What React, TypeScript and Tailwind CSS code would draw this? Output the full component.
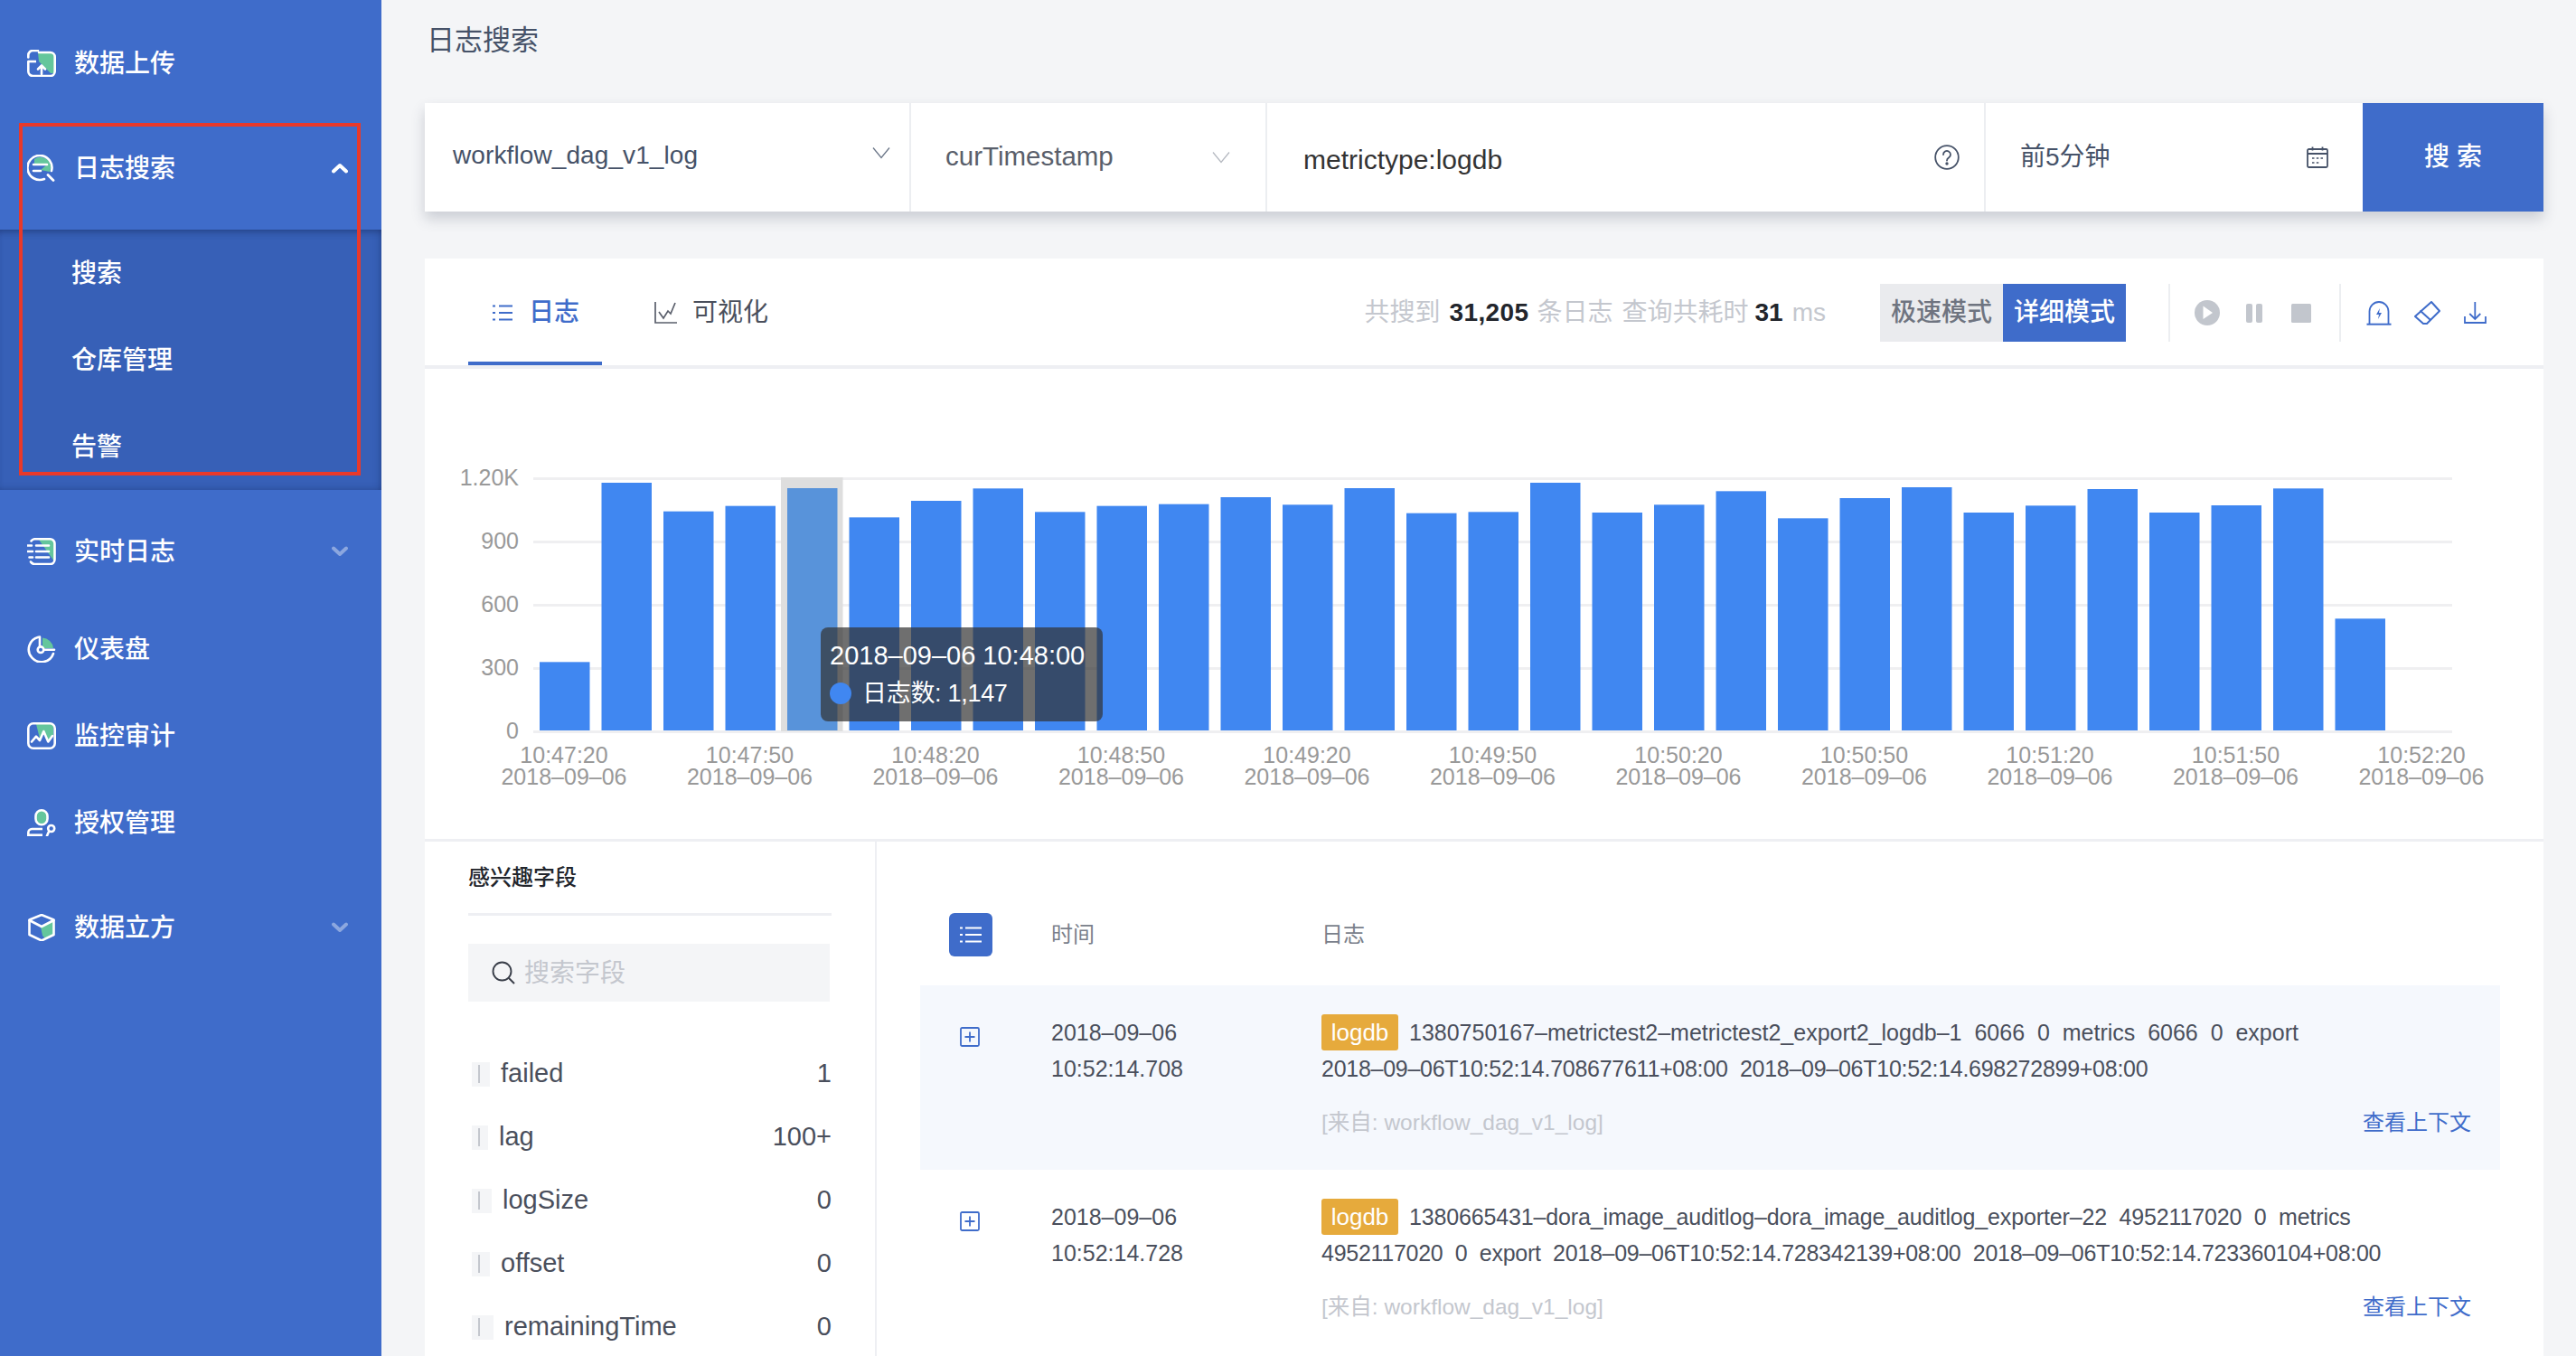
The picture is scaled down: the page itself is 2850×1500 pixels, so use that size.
import React from "react";

const G = "#64c69c";
const W = 2.6;

const IconUpload = () => (
  <svg width="32" height="30" viewBox="0 0 32 30" fill="none">
    <path d="M12 3H25a5 5 0 0 1 5 5V26H26L13 13z" fill={G} />
    <path d="M1.300 8.500V6a5 5 0 0 1 5-5H12" stroke="#fff" strokeWidth={W} strokeLinecap="round" />
    <path d="M1.300 13V24a5 5 0 0 0 5 5H25.700a5 5 0 0 0 5-5V8a5 5 0 0 0-5-5H13" stroke="#fff" strokeWidth={W} strokeLinecap="round" />
    <path d="M1.300 13H10" stroke="#fff" strokeWidth={W} />
    <path d="M16 27V18M12 21.500 16 17.500l4 4" stroke="#fff" strokeWidth={W} strokeLinecap="round" strokeLinejoin="round" />
  </svg>
);
const IconLogSearch = () => (
  <svg width="32" height="30" viewBox="0 0 32 30" fill="none">
    <path d="M8 5a12 12 0 0 1 16 2L26.500 13 25 19 15 17 22 11H8z" fill={G} />
    <path d="M27 18A13.500 13.500 0 1 0 19 27" stroke="#fff" strokeWidth={W} strokeLinecap="round" />
    <path d="M23 22.500 29 28.500" stroke="#fff" strokeWidth="2.800" strokeLinecap="round" />
    <path d="M7 11H22M7 18H15" stroke="#fff" strokeWidth={W} strokeLinecap="round" />
  </svg>
);
const IconRealtime = () => (
  <svg width="32" height="30" viewBox="0 0 32 30" fill="none">
    <path d="M13 2H26a4 4 0 0 1 4 4V26L13 2z" fill={G} />
    <path d="M4.500 3.500A5 5 0 0 1 8 1.300H25.500a5 5 0 0 1 5 5V24a5 5 0 0 1-5 5H8a5 5 0 0 1-4-2.500" stroke="#fff" strokeWidth={W} strokeLinecap="round" />
    <path d="M10 8.500H24M0.700 8.500H5M10 15H24M0.700 15H6M10 21.500H24M2.500 21.500H6" stroke="#fff" strokeWidth={W} strokeLinecap="round" />
  </svg>
);
const IconDash = () => (
  <svg width="32" height="30" viewBox="0 0 32 30" fill="none">
    <path d="M17 2.500A13 13 0 0 1 29 14H18L17 11z" fill={G} />
    <path d="M12.500 1.700A14 14 0 1 0 29 20" stroke="#fff" strokeWidth={W} strokeLinecap="round" />
    <path d="M14 1.500V12M19 15.700H30" stroke="#fff" strokeWidth={W} strokeLinecap="round" />
    <circle cx="15" cy="15.700" r="3.300" stroke="#fff" strokeWidth={W} />
  </svg>
);
const IconMonitor = () => (
  <svg width="32" height="30" viewBox="0 0 32 30" fill="none">
    <path d="M10 2H26a3 3 0 0 1 3 3V17L28 15 23.300 21.500 18.300 10 14 18z" fill={G} />
    <rect x="1.300" y="1.300" width="29.400" height="27.400" rx="5.500" stroke="#fff" strokeWidth={W} />
    <path d="M5 21.500 10 15.700 14 20 18.300 10 23.300 21.500 28 15" stroke="#fff" strokeWidth={W} strokeLinecap="round" strokeLinejoin="round" />
  </svg>
);
const IconAuth = () => (
  <svg width="32" height="30" viewBox="0 0 32 30" fill="none">
    <rect x="9.500" y="1.300" width="13" height="16" rx="6.500" fill={G} stroke="#fff" strokeWidth={W} />
    <path d="M1.300 30V26A4 4 0 0 1 5.300 22H17" stroke="#fff" strokeWidth={W} />
    <path d="M1 28.700H17" stroke="#fff" strokeWidth={W} />
    <circle cx="26.700" cy="21.500" r="3.500" stroke="#fff" strokeWidth={W} />
    <path d="M24 25 22 29.500" stroke="#fff" strokeWidth={W} strokeLinecap="round" />
  </svg>
);
const IconCube = () => (
  <svg width="32" height="30" viewBox="0 0 32 30" fill="none">
    <path d="M15 14 29 8V23L21 28 17 24z" fill={G} />
    <path d="M16 1 29.500 6.500V23L16 29.500 2.500 23V6.500z" stroke="#fff" strokeWidth={W} strokeLinejoin="round" />
    <path d="M2.500 7 16 14 29.500 7" stroke="#fff" strokeWidth={W} strokeLinejoin="round" strokeLinecap="round" />
  </svg>
);

const Chev = ({ up, dim }: { up?: boolean; dim?: boolean }) => (
  <svg width="18" height="12" viewBox="0 0 18 12" fill="none" className={dim ? "opacity-40" : ""}>
    <path d={up ? "M2 9.500 9 3l7 6.500" : "M2 2.500 9 9l7-6.500"} stroke="#fff" strokeWidth="4" strokeLinecap="round" strokeLinejoin="round" />
  </svg>
);

const Thin = ({ color }: { color: string }) => (
  <svg width="20" height="14" viewBox="0 0 20 14" fill="none">
    <path d="M1 1.500 10 12.500 19 1.500" stroke={color} strokeWidth="1.300" />
  </svg>
);

const ROW_TEXT = "flex items-center text-white text-[28px] font-medium";

function SideItem({ icon, label, chev }: { icon: React.ReactNode; label: string; chev?: "up" | "down" }) {
  return (
    <div className={`${ROW_TEXT} h-[96px] pl-[30px] pr-[37px]`}>
      <span className="w-[52px] shrink-0 flex items-center">{icon}</span>
      <span className="flex-1 pt-[2px]">{label}</span>
      {chev === "up" && <Chev up />}
      {chev === "down" && <Chev dim />}
    </div>
  );
}

function Sidebar() {
  return (
    <aside className="relative w-[422px] shrink-0 h-full bg-[#3f6cca] pt-[22px]">
      <SideItem icon={<IconUpload />} label="数据上传" />
      <div className="mt-[20px]">
        <SideItem icon={<IconLogSearch />} label="日志搜索" chev="up" />
      </div>
      <div className="mt-[20px] h-[288px] bg-[#3760b7] shadow-[inset_0_8px_8px_-6px_rgba(20,40,90,0.55),inset_-6px_0_8px_-6px_rgba(20,40,90,0.4),inset_0_-6px_8px_-6px_rgba(20,40,90,0.3)]">
        {["搜索", "仓库管理", "告警"].map((t) => (
          <div key={t} className={`${ROW_TEXT} h-[96px] pl-[79px] pt-[2px]`}>{t}</div>
        ))}
      </div>
      <div className="mt-[20px]">
        <SideItem icon={<IconRealtime />} label="实时日志" chev="down" />
      </div>
      <div className="mt-[12px]">
        <SideItem icon={<IconDash />} label="仪表盘" />
      </div>
      <SideItem icon={<IconMonitor />} label="监控审计" />
      <SideItem icon={<IconAuth />} label="授权管理" />
      <div className="mt-[20px]">
        <SideItem icon={<IconCube />} label="数据立方" chev="down" />
      </div>
      <div className="absolute left-[21px] top-[136px] w-[378px] h-[390px] border-4 border-[#e8392a]" />
    </aside>
  );
}

function SearchBar() {
  return (
    <div className="flex h-[120px] bg-white shadow-[0_8px_14px_rgba(60,70,90,0.22)]">
      <div className="w-[538px] shrink-0 flex items-center pl-[31px] pr-[21px] border-r-2 border-[#eceef1] text-[28px] text-[#465268]">
        <span className="flex-1 -mt-[4px] tracking-[0.1px]">workflow_dag_v1_log</span>
        <span className="-mt-[10px]"><Thin color="#6b7688" /></span>
      </div>
      <div className="w-[394px] shrink-0 flex items-center pl-[38px] pr-[39px] border-r-2 border-[#eceef1] text-[29.5px] text-[#5a5f6b]">
        <span className="flex-1 -mt-[2px]">curTimestamp</span>
        <Thin color="#b5b9c1" />
      </div>
      <div className="w-[795px] shrink-0 flex items-center pl-[40px] pr-[27px] border-r-2 border-[#eceef1] text-[30px] text-[#333]">
        <span className="flex-1 mt-[4px]">metrictype:logdb</span>
        <svg width="28" height="28" viewBox="0 0 28 28" fill="none" stroke="#465268" strokeWidth="1.800">
          <circle cx="14" cy="14" r="12.800" />
          <path d="M10 11a4 4 0 1 1 6.200 3.300c-1.400.9-2.200 1.700-2.200 3.200" strokeLinecap="round" />
          <circle cx="14" cy="21" r="0.800" fill="#465268" />
        </svg>
      </div>
      <div className="flex-1 flex items-center pl-[38px] pr-[38px] text-[28px] text-[#465268]">
        <span className="flex-1">前5分钟</span>
        <svg width="24" height="24" viewBox="0 0 24 24" fill="none" stroke="#465268" strokeWidth="1.800">
          <rect x="1" y="3" width="22" height="20" rx="1.500" />
          <path d="M1 8h22M6.500 0.500v4M17.500 0.500v4" />
          <path d="M6 13h2.500M10.800 13h2.500M15.500 13h2.500M6 18h2.500M10.800 18h2.500" strokeWidth="1.500" />
        </svg>
      </div>
      <div className="w-[200px] shrink-0 bg-[#3f6cca] text-white text-[28px] font-medium flex items-center justify-center tracking-[8px] pl-[8px]">
        搜索
      </div>
    </div>
  );
}

function Tabs() {
  return (
    <div className="relative flex items-center h-[122px] border-b-4 border-[#eeeff3] pl-[48px] pr-[63px] pt-[2px]">
      <div className="relative h-full w-[148px] flex items-center justify-center gap-[18px] pl-[2px] text-[28px] text-[#3f6cca] font-medium">
        <svg width="22" height="22" viewBox="0 0 22 22" fill="none" stroke="#3f6cca" strokeWidth="1.800">
          <path d="M7 3.500h15M7 11h15M7 18.500h15M0 3.500h3M0 11h3M0 18.500h3" />
        </svg>
        <span>日志</span>
        <div className="absolute left-0 right-0 bottom-0 h-[4px] bg-[#3f6cca]" />
      </div>
      <div className="ml-[58px] flex items-center gap-[16px] text-[28px] text-[#4a4f5c]">
        <svg width="26" height="26" viewBox="0 0 26 26" fill="none" stroke="#5a5f6b" strokeWidth="1.700">
          <path d="M1 1v23h24" />
          <path d="M5 12l5 7 5-8 3 3 5-12" />
        </svg>
        <span>可视化</span>
      </div>
      <div className="ml-auto flex items-center text-[28px] text-[#c4c7ce]">
        <span>共搜到</span>
        <b className="ml-[10px] text-[#22252c] font-bold tracking-[0.4px]">31,205</b>
        <span className="ml-[9px]">条日志</span>
        <span className="ml-[10px]">查询共耗时</span>
        <b className="ml-[7px] text-[#22252c] font-bold">31</b>
        <span className="ml-[10px]">ms</span>
        <div className="ml-[60px] flex h-[64px]">
          <div className="w-[136px] bg-[#eaebee] text-[#6f7480] flex items-center justify-center font-medium">极速模式</div>
          <div className="w-[136px] bg-[#3f6cca] text-white flex items-center justify-center font-medium">详细模式</div>
        </div>
        <div className="ml-[47px] w-[2px] h-[64px] bg-[#eceef1]" />
        <div className="ml-[27px] flex items-center">
          <svg width="28" height="28" viewBox="0 0 28 28">
            <circle cx="14" cy="14" r="14" fill="#c2c6cd" />
            <path d="M9.500 6.500 20 14 9.500 21z" fill="#fff" />
          </svg>
          <svg width="18" height="21" viewBox="0 0 18 21" fill="#c2c6cd" className="ml-[29px]">
            <rect x="0" y="0" width="7" height="21" rx="2" />
            <rect x="11" y="0" width="7" height="21" rx="2" />
          </svg>
          <svg width="22" height="21" viewBox="0 0 22 21" className="ml-[32px]">
            <rect x="0" y="0" width="22" height="21" rx="1.500" fill="#c2c6cd" />
          </svg>
        </div>
        <div className="ml-[31px] w-[2px] h-[64px] bg-[#eceef1]" />
        <div className="ml-[28px] flex items-center">
          <svg width="28" height="27" viewBox="0 0 28 27" fill="none" stroke="#3f6cca" strokeWidth="1.800">
            <path d="M3.500 25V11.500a10.500 10.500 0 0 1 21 0V25" />
            <path d="M0.500 25.700H27.500" strokeWidth="2" />
            <path d="M15 8 11 15H14L13 20 17 13H14z" fill="#3f6cca" stroke="none" />
          </svg>
          <svg width="29" height="27" viewBox="0 0 29 27" fill="none" stroke="#3f6cca" strokeWidth="2" strokeLinejoin="round" className="ml-[25px]">
            <path d="M19 1 28 11 14 25H10L1 17z" />
            <path d="M6.500 10.500 18 21" />
          </svg>
          <svg width="25" height="24" viewBox="0 0 25 24" fill="none" stroke="#3f6cca" strokeWidth="1.800" className="ml-[26px]">
            <path d="M12.300 0V19M6.300 13 12.300 19 18.300 13" />
            <path d="M1 16V23H24V16" />
          </svg>
        </div>
      </div>
    </div>
  );
}

const TOPS = [757, 162, 257, 239, 180, 277, 222, 181, 259, 239, 233, 210, 235, 180, 263, 259, 162, 261, 235, 190, 280, 213, 177, 261, 238, 183, 261, 237, 181, 613];
const GRID = [
  { y: 529, t: "1.20K" },
  { y: 599, t: "900" },
  { y: 669, t: "600" },
  { y: 739, t: "300" },
  { y: 809, t: "0" },
];
const XT = ["10:47:20", "10:47:50", "10:48:20", "10:48:50", "10:49:20", "10:49:50", "10:50:20", "10:50:50", "10:51:20", "10:51:50", "10:52:20"];

function Chart() {
  return (
    <div className="relative h-[523px] border-b-[3px] border-[#eeeff3]">
      <svg width="2344" height="520" viewBox="470 408 2344 520" className="block">
        {GRID.map((g) => (
          <g key={g.t}>
            <rect x="590" y={g.y - 1} width="2123" height="3" fill="#efeff1" />
            <text x="574" y={g.y + 8} textAnchor="end" fontSize="25" fill="#999">{g.t}</text>
          </g>
        ))}
        <rect x="864" y="528" width="68.500" height="281" fill="#dedede" />
        {TOPS.map((v, i) => {
          const top = 480 + v / 3;
          return (
            <rect key={i} x={597 + 68.5 * i} y={top} width="55.500" height={808 - top} fill={i === 4 ? "#5893da" : "#4087f1"} />
          );
        })}
        {XT.map((t, i) => {
          const cx = 624 + 205.5 * i;
          return (
            <g key={t} textAnchor="middle" fontSize="25" fill="#999">
              <text x={cx} y="844">{t}</text>
              <text x={cx} y="868">2018–09–06</text>
            </g>
          );
        })}
      </svg>
      <div className="absolute left-[438px] top-[286px] w-[312px] h-[104px] rounded-[8px] bg-[rgba(50,50,50,0.7)] text-white text-[29px] pl-[10px] pt-[10px]">
        <div className="h-[42px] leading-[42px] whitespace-nowrap">2018–09–06 10:48:00</div>
        <div className="h-[42px] flex items-center whitespace-nowrap text-[27px] tracking-[-0.3px]">
          <span className="w-[24px] h-[24px] rounded-full bg-[#4087f1] mr-[12px]" />
          日志数: 1,147
        </div>
      </div>
    </div>
  );
}

const FIELDS = [
  { n: "failed", v: "1", w: "w-[20px]" },
  { n: "lag", v: "100+", w: "w-[18px]" },
  { n: "logSize", v: "0", w: "w-[22px]" },
  { n: "offset", v: "0", w: "w-[20px]" },
  { n: "remainingTime", v: "0", w: "w-[24px]" },
];

function Fields() {
  return (
    <div className="w-[500px] shrink-0 border-r-2 border-[#eeeff3] pl-[48px] pr-[48px]">
      <div className="h-[79px] flex items-center text-[24px] font-medium text-[#22252c] border-b-[3px] border-[#eeeff3] box-content">感兴趣字段</div>
      <div className="mt-[31px] w-[400px] h-[64px] bg-[#f4f5f7] flex items-center pl-[26px] text-[28px] text-[#c4c7ce]">
        <svg width="26" height="26" viewBox="0 0 26 26" fill="none" stroke="#3a3f4a" strokeWidth="1.900" className="mr-[10px]">
          <circle cx="11.500" cy="11.500" r="10" />
          <path d="M18.500 18.500 25 25" />
        </svg>
        <span className="pt-[2px]">搜索字段</span>
      </div>
      <div className="mt-[45px]">
        {FIELDS.map((f) => (
          <div key={f.n} className="h-[70px] flex items-center pl-[4px] text-[29px] text-[#4a4f5c]">
            <span className={`${f.w} h-[27px] bg-[#f4f5f7] flex items-center pl-[7px] mr-[12px]`}>
              <span className="w-[2px] h-[20px] bg-[#c4c7ce]" />
            </span>
            <span className="flex-1">{f.n}</span>
            <span>{f.v}</span>
          </div>
        ))}
      </div>
    </div>
  );
}

const ROWS = [
  {
    time: "10:52:14.708",
    l1: "1380750167–metrictest2–metrictest2_export2_logdb–1  6066  0  metrics  6066  0  export",
    l2: "2018–09–06T10:52:14.708677611+08:00  2018–09–06T10:52:14.698272899+08:00",
    bg: "bg-[#f5f8fd]",
    t1: "",
  },
  {
    time: "10:52:14.728",
    l1: "1380665431–dora_image_auditlog–dora_image_auditlog_exporter–22  4952117020  0  metrics",
    l2: "4952117020  0  export  2018–09–06T10:52:14.728342139+08:00  2018–09–06T10:52:14.723360104+08:00",
    bg: "",
    t1: "tracking-[-0.15px]",
  },
];

function LogRow({ r }: { r: (typeof ROWS)[number] }) {
  return (
    <div className={`h-[204px] pt-[32px] grid grid-cols-[145px_299px_1fr] text-[25px] text-[#4a4f5c] ${r.bg}`}>
      <div className="pl-[44px] pt-[14px]">
        <svg width="22" height="22" viewBox="0 0 22 22" fill="none" stroke="#3f6cca">
          <rect x="1" y="1" width="20" height="20" rx="1.500" strokeWidth="1.800" />
          <path d="M11 5.500v11M5.500 11h11" strokeWidth="1.800" />
        </svg>
      </div>
      <div className="leading-[40px]">
        <div>2018–09–06</div>
        <div>{r.time}</div>
      </div>
      <div className="pr-[32px] leading-[40px] whitespace-pre">
        <div className="flex items-center h-[40px]">
          <span className="w-[85px] h-[40px] rounded-[3px] bg-[#e6aa3c] text-white text-[26px] text-center mr-[12px]">logdb</span>
          <span className={r.t1}>{r.l1}</span>
        </div>
        <div className="tracking-[-0.27px]">{r.l2}</div>
        <div className="mt-[20px] flex justify-between text-[24px]">
          <span className="text-[#c4c7ce] text-[24.500px]">[来自: workflow_dag_v1_log]</span>
          <span className="text-[#3f6cca]">查看上下文</span>
        </div>
      </div>
    </div>
  );
}

function Logs() {
  return (
    <div className="flex-1 px-[48px]">
      <div className="pt-[79px] pb-[32px] grid grid-cols-[145px_299px_1fr] items-center text-[24px] text-[#7a7f8b]">
        <div className="pl-[32px]">
          <div className="w-[48px] h-[48px] rounded-[6px] bg-[#3f6cca] flex items-center justify-center">
            <svg width="24" height="20" viewBox="0 0 24 20" fill="none" stroke="#fff" strokeWidth="2.200">
              <path d="M6 2.500h18M6 10h18M6 17.500h18M0 2.500h3M0 10h3M0 17.500h3" />
            </svg>
          </div>
        </div>
        <div>时间</div>
        <div>日志</div>
      </div>
      {ROWS.map((r) => (
        <LogRow key={r.time} r={r} />
      ))}
    </div>
  );
}

export default function App() {
  return (
    <div className="w-[2850px] h-[1500px] flex overflow-hidden bg-[#f4f5f7] font-['Liberation_Sans','Noto_Sans_CJK_SC',sans-serif]">
      <Sidebar />
      <main className="flex-1 pl-[48px] pr-[36px] min-w-0">
        <div className="h-[90px] flex items-center text-[31px] text-[#465268] pl-[2px]">日志搜索</div>
        <div className="mt-[24px]"><SearchBar /></div>
        <div className="mt-[52px] bg-white h-[1214px] overflow-hidden">
          <Tabs />
          <Chart />
          <div className="flex">
            <Fields />
            <Logs />
          </div>
        </div>
      </main>
    </div>
  );
}
